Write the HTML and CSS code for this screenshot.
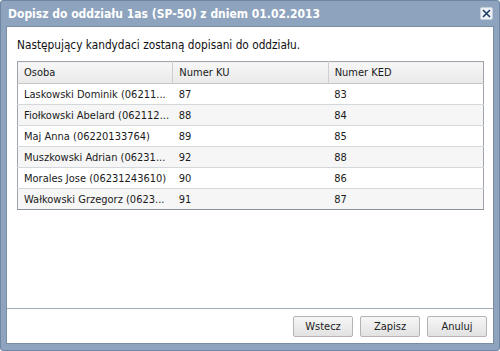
FILE: index.html
```html
<!DOCTYPE html>
<html lang="pl">
<head>
<meta charset="utf-8">
<title>Dopisz do oddziału</title>
<link rel="stylesheet" href="styles.css">
</head>
<body>
<div class="dialog">
  <div class="titlebar">
    <span class="title">Dopisz do oddziału 1as (SP-50) z dniem 01.02.2013</span>
    <span class="close">
      <svg width="9" height="9" viewBox="0 0 9 9"><path d="M1 1L8 8M8 1L1 8" stroke="#1f3b66" stroke-width="1.6" fill="none"/></svg>
    </span>
  </div>
  <div class="body">
    <div class="main">
      <p class="intro">Następujący kandydaci zostaną dopisani do oddziału.</p>
      <table class="grid">
        <thead>
          <tr><th>Osoba</th><th>Numer KU</th><th>Numer KED</th></tr>
        </thead>
        <tbody>
          <tr><td>Laskowski Dominik (06211...</td><td>87</td><td>83</td></tr>
          <tr class="alt"><td>Fiołkowski Abelard (062112...</td><td>88</td><td>84</td></tr>
          <tr><td>Maj Anna (06220133764)</td><td>89</td><td>85</td></tr>
          <tr class="alt"><td>Muszkowski Adrian (06231...</td><td>92</td><td>88</td></tr>
          <tr><td>Morales Jose (06231243610)</td><td>90</td><td>86</td></tr>
          <tr class="alt"><td>Wałkowski Grzegorz (0623...</td><td>91</td><td>87</td></tr>
        </tbody>
      </table>
    </div>
    <div class="footer">
      <button class="btn">Wstecz</button>
      <button class="btn">Zapisz</button>
      <button class="btn">Anuluj</button>
    </div>
  </div>
</div>
</body>
</html>
```

FILE: styles.css
```css
html, body {
  margin: 0;
  padding: 0;
  background: #ffffff;
}

.dialog {
  width: 500px;
  height: 351px;
  box-sizing: border-box;
  background: #8ea3bd;
  border: 1px solid #6f86a4;
  border-radius: 3px;
  padding: 0 5px 6px;
  display: flex;
  flex-direction: column;
  font-family: "DejaVu Sans Condensed", "DejaVu Sans", sans-serif;
}

.titlebar {
  height: 25px;
  display: flex;
  align-items: center;
  justify-content: space-between;
  padding-left: 2px;
}

.title {
  color: #ffffff;
  font-weight: bold;
  font-size: 12px;
}

.close {
  width: 13px;
  height: 13px;
  box-sizing: border-box;
  background: #eef2f7;
  border: 1px solid #c4cfdc;
  border-radius: 2px;
  display: flex;
  align-items: center;
  justify-content: center;
  margin-right: 1px;
}

.body {
  flex: 1;
  background: #ffffff;
  border: 1px solid #7b8da5;
  display: flex;
  flex-direction: column;
}

.main {
  flex: 1;
  padding: 10px 10px 0;
}

.intro {
  margin: 0 0 8px;
  font-size: 11.75px;
  line-height: 16px;
  color: #111111;
}

.grid {
  width: 467px;
  border-collapse: collapse;
  table-layout: fixed;
  font-size: 11px;
  color: #1a1a1a;
  border: 1px solid #9fa5ad;
  border-bottom-color: #8c9299;
}

.grid th {
  height: 21px;
  text-align: left;
  font-weight: normal;
  padding: 0 6px;
  background: linear-gradient(#f7f7f7, #e9e9e9);
  border-bottom: 1px solid #c6c6c6;
  border-left: 1px solid #cfcfcf;
}

.grid th:first-child {
  border-left: none;
}

.grid td {
  height: 20px;
  padding: 0 6px;
  border-top: 1px solid #d4d8dd;
  white-space: nowrap;
  overflow: hidden;
}

.grid tbody tr:first-child td {
  border-top: none;
}

.grid tr.alt td {
  background: #f6f6f6;
}

.footer {
  height: 34px;
  border-top: 1px solid #a3abb5;
  display: flex;
  align-items: center;
  justify-content: flex-end;
  gap: 7px;
  padding-right: 6px;
}

.btn {
  width: 60px;
  height: 21px;
  font-family: "DejaVu Sans Condensed", "DejaVu Sans", sans-serif;
  font-size: 11px;
  color: #222222;
  background: linear-gradient(#f6f6f6, #e2e2e2);
  border: 1px solid #b4b4b4;
  border-radius: 2px;
  padding: 0;
}
```
